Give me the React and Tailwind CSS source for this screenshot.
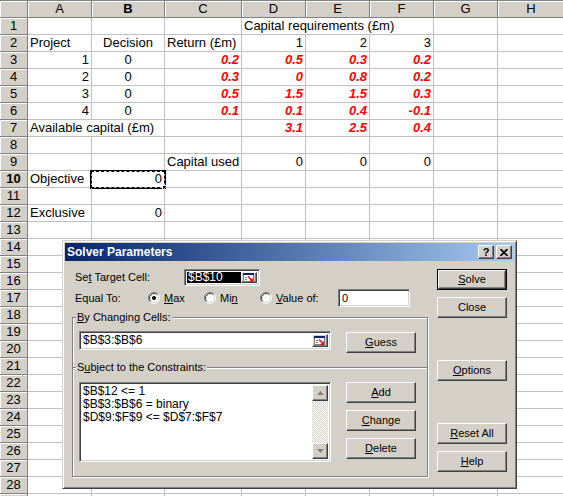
import React from 'react';

const COLS = ['A', 'B', 'C', 'D', 'E', 'F', 'G', 'H'];

const num = (t) => ({ t, a: 'r' });
const mid = (t) => ({ t, a: 'c' });
const red = (t) => ({ t, a: 'r', red: true });

// contents of the sheet, row -> column -> cell
const cells = {
  1: { D: { t: 'Capital requirements (£m)', span: 3 } },
  2: { A: { t: 'Project' }, B: mid('Decision'), C: { t: 'Return (£m)' }, D: num('1'), E: num('2'), F: num('3') },
  3: { A: num('1'), B: mid('0'), C: red('0.2'), D: red('0.5'), E: red('0.3'), F: red('0.2') },
  4: { A: num('2'), B: mid('0'), C: red('0.3'), D: red('0'), E: red('0.8'), F: red('0.2') },
  5: { A: num('3'), B: mid('0'), C: red('0.5'), D: red('1.5'), E: red('1.5'), F: red('0.3') },
  6: { A: num('4'), B: mid('0'), C: red('0.1'), D: red('0.1'), E: red('0.4'), F: red('-0.1') },
  7: { A: { t: 'Available capital (£m)', span: 2 }, D: red('3.1'), E: red('2.5'), F: red('0.4') },
  9: { C: { t: 'Capital used' }, D: num('0'), E: num('0'), F: num('0') },
  10: { A: { t: 'Objective' }, B: { t: '0', a: 'r', sel: true } },
  12: { A: { t: 'Exclusive' }, B: num('0') },
};

const raised =
  'bg-[#d4d0c8] border border-t-white border-l-white border-b-[#404040] border-r-[#404040] shadow-[inset_-1px_-1px_0_#808080]';
const sunken =
  'bg-white border border-t-[#808080] border-l-[#808080] border-b-white border-r-white shadow-[inset_1px_1px_0_#404040,inset_-1px_-1px_0_#d4d0c8]';
const hdr =
  'bg-[#d4d0c8] border-r border-b border-[#808080] shadow-[inset_1px_1px_0_#fff] flex items-center justify-center';

function Sheet() {
  const rows = [];
  for (let r = 1; r <= 29; r++) {
    const data = cells[r] || {};
    const noRight = new Set();
    COLS.forEach((c, i) => {
      const cell = data[c];
      if (cell && cell.span) for (let k = 0; k < cell.span - 1; k++) noRight.add(i + k);
    });
    rows.push(
      <React.Fragment key={r}>
        <div className={`${hdr} h-[17px] ${r === 10 ? 'font-bold' : ''}`}>{r < 29 ? r : ''}</div>
        {COLS.map((c, i) => {
          const cell = data[c];
          const align = cell?.a === 'r' ? 'justify-end' : cell?.a === 'c' ? 'justify-center' : 'justify-start';
          return (
            <div
              key={c}
              className={`relative h-[17px] border-b border-[#c0c0c0] flex items-center px-[2px] whitespace-nowrap ${
                noRight.has(i) ? '' : 'border-r'
              } ${align}`}
            >
              {cell && (
                <span className={cell.red ? 'text-[#ff0000] font-bold italic' : ''}>{cell.t}</span>
              )}
              {cell?.sel && (
                <>
                  <div className="absolute -left-[2px] -top-[1px] w-[76px] h-[19px] border border-black">
                    <div className="w-full h-full border border-dashed border-black" />
                  </div>
                  <div className="absolute -right-[3px] -bottom-[3px] w-[5px] h-[5px] bg-black border border-white" />
                </>
              )}
            </div>
          );
        })}
      </React.Fragment>
    );
  }

  return (
    <div className="grid grid-cols-[28px_64px_73px_77px_64px_64px_64px_64px_67px] text-[13px] leading-[16px] text-black">
      <div className={`${hdr} h-[18px] border-t`} />
      {COLS.map((c) => (
        <div key={c} className={`${hdr} h-[18px] border-t ${c === 'B' ? 'font-bold' : ''}`}>
          {c}
        </div>
      ))}
      {rows}
    </div>
  );
}

function RefButton() {
  return (
    <div className={`${raised} w-[16px] h-full flex items-center justify-center shrink-0`}>
      <svg width="12" height="10" viewBox="0 0 12 10">
        <rect x="0.5" y="0.5" width="10" height="8" fill="#fff" stroke="#808080" />
        <rect x="0" y="0" width="11" height="2" fill="#0a246a" />
        <path d="M2 4.5h2M2 6.5h2" stroke="#808080" />
        <path d="M5 3.5 L8.5 7" stroke="#ff0000" strokeWidth="1.4" />
        <path d="M10 9 L10 5 L6 9 Z" fill="#ff0000" />
      </svg>
    </div>
  );
}

function Radio({ on }) {
  return (
    <svg width="12" height="12" viewBox="0 0 12 12" className="shrink-0">
      <circle cx="6" cy="6" r="5" fill="#fff" />
      <path d="M2.11 9.89 A5.5 5.5 0 0 1 9.89 2.11" stroke="#808080" fill="none" />
      <path d="M2.82 9.18 A4.5 4.5 0 0 1 9.18 2.82" stroke="#404040" fill="none" />
      <path d="M9.89 2.11 A5.5 5.5 0 0 1 2.11 9.89" stroke="#fff" fill="none" />
      <path d="M9.18 2.82 A4.5 4.5 0 0 1 2.82 9.18" stroke="#d4d0c8" fill="none" />
      {on && <circle cx="6" cy="6" r="2" fill="#000" />}
    </svg>
  );
}

function Btn({ children, className = '' }) {
  return <div className={`${raised} w-[70px] h-[21px] flex items-center justify-center ${className}`}>{children}</div>;
}

function Arrow({ up }) {
  return (
    <div className={`${raised} w-[16px] h-[16px] flex items-center justify-center`}>
      <svg width="7" height="4" viewBox="0 0 7 4">
        <path d={up ? 'M3.5 0 L7 4 L0 4 Z' : 'M0 0 L7 0 L3.5 4 Z'} fill="#808080" />
      </svg>
    </div>
  );
}

function Group({ label, className = '', children }) {
  return (
    <div
      className={`border border-[#808080] shadow-[inset_1px_1px_0_#fff,1px_1px_0_#fff] ${className}`}
    >
      <div className="w-fit ml-[3px] px-[1px] -mt-[7px] bg-[#d4d0c8] leading-[13px]">{label}</div>
      {children}
    </div>
  );
}

function SolverDialog() {
  return (
    <div className="absolute left-[62px] top-[240px] w-[455px] h-[249px] bg-[#d4d0c8] border border-t-[#d4d0c8] border-l-[#d4d0c8] border-b-[#404040] border-r-[#404040] shadow-[inset_1px_1px_0_#fff,inset_-1px_-1px_0_#808080] p-[2px] text-[11px] leading-[13px] text-black">
      <div className="h-[18px] flex items-center justify-between pl-[2px] pr-[2px] bg-gradient-to-r from-[#0a246a] to-[#a6caf0]">
        <span className="text-white font-bold text-[12px]">Solver Parameters</span>
        <div className="flex">
          <div className={`${raised} w-[16px] h-[14px] flex items-center justify-center font-bold text-[11px] leading-none`}>?</div>
          <div className={`${raised} w-[16px] h-[14px] flex items-center justify-center ml-[2px]`}>
            <svg width="8" height="7" viewBox="0 0 8 7">
              <path d="M0.5 0 L7.5 7 M7.5 0 L0.5 7" stroke="#000" strokeWidth="1.6" />
            </svg>
          </div>
        </div>
      </div>

      <div className="flex">
        <div className="w-[356px] ml-[7px] pt-[8px]">
          <div className="flex items-center h-[17px] pl-[3px]">
            <span className="w-[109px]">
              Se<span className="underline">t</span> Target Cell:
            </span>
            <div className={`${sunken} w-[76px] h-[17px] flex items-stretch p-[2px]`}>
              <div className="flex-1 bg-black text-white flex items-center pl-[1px] text-[12px]">$B$10</div>
              <RefButton />
            </div>
          </div>

          <div className="flex items-center h-[18px] pl-[3px] mt-[3px]">
            <span className="w-[73px]">Equal To:</span>
            <div className="w-[56px] flex items-center gap-[4px]">
              <Radio on />
              <span>
                <span className="underline">M</span>ax
              </span>
            </div>
            <div className="w-[56px] flex items-center gap-[4px]">
              <Radio />
              <span>
                Mi<span className="underline">n</span>
              </span>
            </div>
            <div className="w-[78px] flex items-center gap-[4px]">
              <Radio />
              <span>
                <span className="underline">V</span>alue of:
              </span>
            </div>
            <div className={`${sunken} w-[72px] h-[18px] flex items-center pl-[3px]`}>0</div>
          </div>

          <Group
            className="mt-[10px] border-b-0 pb-[14px]"
            label={
              <>
                <span className="underline">B</span>y Changing Cells:
              </>
            }
          >
            <div className="flex items-start pt-[7px] pl-[6px]">
              <div className={`${sunken} w-[252px] h-[19px] flex items-stretch p-[2px]`}>
                <div className="flex-1 flex items-center pl-[1px] text-[12px]">$B$3:$B$6</div>
                <RefButton />
              </div>
              <Btn className="ml-[15px] mt-[1px] h-[20px]">
                <span className="underline">G</span>uess
              </Btn>
            </div>
          </Group>

          <Group
            className="pb-[14px]"
            label={
              <>
                S<span className="underline">u</span>bject to the Constraints:
              </>
            }
          >
            <div className="flex items-start pt-[8px] pl-[6px]">
              <div className={`${sunken} w-[252px] h-[80px] flex p-[2px]`}>
                <div className="flex-1 pl-[1px] text-[12px] leading-[13px]">
                  <div>$B$12 &lt;= 1</div>
                  <div>$B$3:$B$6 = binary</div>
                  <div>$D$9:$F$9 &lt;= $D$7:$F$7</div>
                </div>
                <div className="w-[16px] flex flex-col">
                  <Arrow up />
                  <div className="flex-1 bg-[repeating-conic-gradient(#d4d0c8_0_25%,#fff_0_50%)] bg-[length:2px_2px]" />
                  <Arrow />
                </div>
              </div>
              <div className="ml-[15px] flex flex-col gap-[7px]">
                <Btn>
                  <span className="underline">A</span>dd
                </Btn>
                <Btn>
                  <span className="underline">C</span>hange
                </Btn>
                <Btn>
                  <span className="underline">D</span>elete
                </Btn>
              </div>
            </div>
          </Group>
        </div>

        <div className="ml-[9px] pt-[8px] flex flex-col">
          <div className="border border-black w-[70px] h-[21px] flex">
            <div className={`${raised} flex-1 flex items-center justify-center`}>
              <span className="underline">S</span>olve
            </div>
          </div>
          <Btn className="mt-[7px]">Close</Btn>
          <Btn className="mt-[42px]">
            <span className="underline">O</span>ptions
          </Btn>
          <Btn className="mt-[42px]">
            <span className="underline">R</span>eset All
          </Btn>
          <Btn className="mt-[7px]">
            <span className="underline">H</span>elp
          </Btn>
        </div>
      </div>
    </div>
  );
}

export default function App() {
  return (
    <div className="relative w-[563px] h-[496px] overflow-hidden bg-white font-['Liberation_Sans',Arial,sans-serif]">
      <Sheet />
      <SolverDialog />
    </div>
  );
}
